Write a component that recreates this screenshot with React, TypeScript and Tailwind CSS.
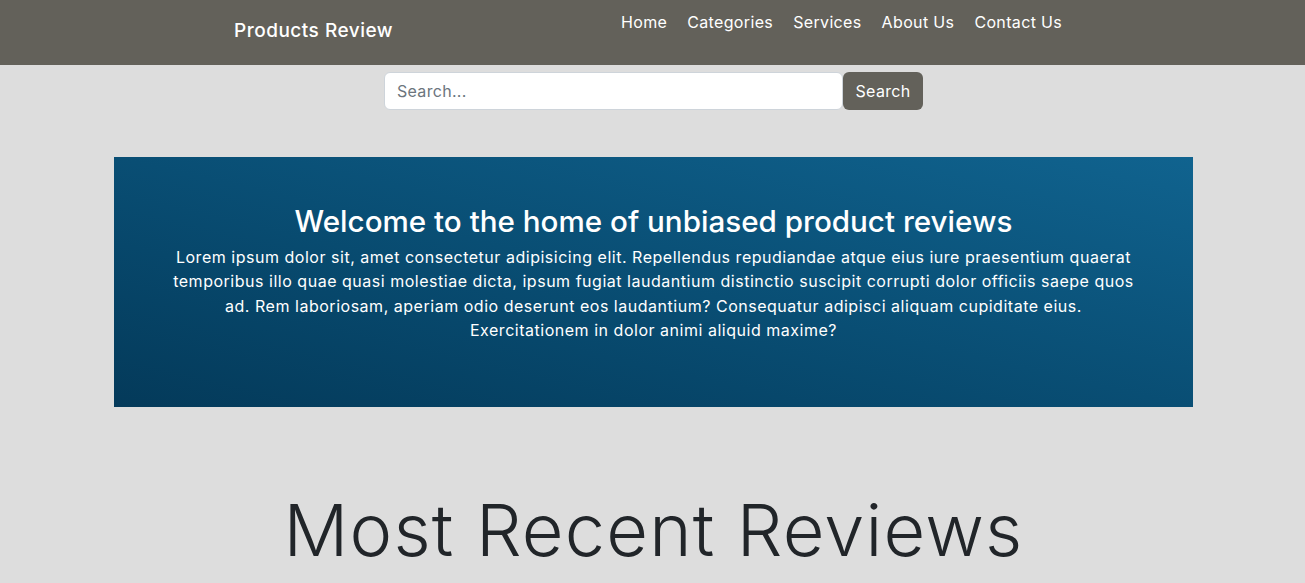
import React from "react";

const font = { fontFamily: "Inter, 'Noto Sans', sans-serif" };

export default function App() {
  return (
    <div className="min-h-[583px] bg-[#dddddd] text-[#212529]" style={font}>
      <header className="h-[65px] bg-[#63615a] flex items-start">
        <div className="w-[621px] pl-[234px] pt-[17px]">
          <span className="text-[19px] font-medium text-white tracking-[0.5px]">Products Review</span>
        </div>
        <nav className="flex gap-[20px] pt-[10px] text-[16px] text-white tracking-[0.35px]">
          <a>Home</a>
          <a>Categories</a>
          <a>Services</a>
          <a>About Us</a>
          <a>Contact Us</a>
        </nav>
      </header>

      <div className="pl-[2px]">
        <div className="flex justify-center pt-[7px]">
          <input
            className="w-[459px] h-[38px] rounded-[6px] border border-[#ced4da] bg-white px-3 text-[16px] tracking-[0.3px] placeholder-[#6c757d] outline-none"
            placeholder="Search..."
          />
          <button className="w-[80px] h-[38px] rounded-[6px] bg-[#63615a] text-white text-[16px] tracking-[0.3px]">Search</button>
        </div>

        <section className="mx-auto mt-[47px] w-[1079px] h-[250px] bg-linear-to-tr from-[#043a5a] to-[#10638f] text-white text-center pt-[44px]">
          <h2 className="text-[29.6px] font-medium leading-[40px]">Welcome to the home of unbiased product reviews</h2>
          <p className="text-[16px] leading-[24.4px] mt-[4px] whitespace-nowrap tracking-[0.52px]">
            Lorem ipsum dolor sit, amet consectetur adipisicing elit. Repellendus repudiandae atque eius iure praesentium quaerat
            <br />
            temporibus illo quae quasi molestiae dicta, ipsum fugiat laudantium distinctio suscipit corrupti dolor officiis saepe quos
            <br />
            ad. Rem laboriosam, aperiam odio deserunt eos laudantium? Consequatur adipisci aliquam cupiditate eius.
            <br />
            Exercitationem in dolor animi aliquid maxime?
          </p>
        </section>

        <h1 className="text-center text-[72px] font-light leading-[86px] mt-[80px] tracking-[1.2px]">Most Recent Reviews</h1>
      </div>
    </div>
  );
}
